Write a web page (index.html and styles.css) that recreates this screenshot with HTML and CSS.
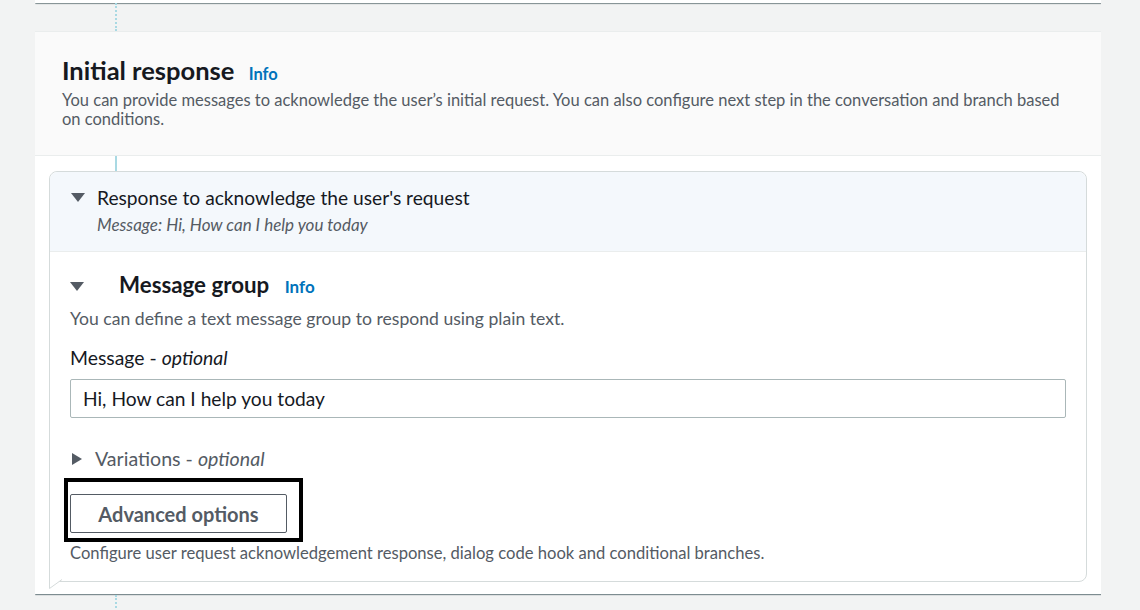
FILE: index.html
```html
<!DOCTYPE html>
<html lang="en">
<head>
<meta charset="utf-8">
<title>Initial response</title>
<link rel="stylesheet" href="styles.css">
</head>
<body>
<div class="page">
  <div class="top-card"></div>
  <div class="connector dotted top"></div>
  <section class="card">
    <header class="card-header">
      <h2 class="card-title">Initial response <a class="info" href="#">Info</a></h2>
      <p class="card-desc">You can provide messages to acknowledge the user’s initial request. You can also configure next step in the conversation and branch based on conditions.</p>
    </header>
    <div class="card-body">
      <div class="bubble">
        <div class="bubble-header">
          <span class="caret down"></span>
          <div class="bubble-heading">
            <div class="bubble-title">Response to acknowledge the user's request</div>
            <div class="bubble-sub">Message: Hi, How can I help you today</div>
          </div>
        </div>
        <div class="bubble-body">
          <div class="group-head">
            <span class="caret down"></span>
            <h3 class="group-title">Message group <a class="info" href="#">Info</a></h3>
          </div>
          <p class="group-desc">You can define a text message group to respond using plain text.</p>
          <label class="field-label">Message - <i>optional</i></label>
          <div class="input">Hi, How can I help you today</div>
          <div class="variations">
            <span class="caret right"></span>
            <span>Variations - <i>optional</i></span>
          </div>
          <div class="highlight">
            <button class="btn" type="button">Advanced options</button>
          </div>
          <p class="help">Configure user request acknowledgement response, dialog code hook and conditional branches.</p>
        </div>
        <svg class="tail" width="16" height="12" viewBox="0 0 16 12" aria-hidden="true">
          <path d="M0.5 0 L0.5 9.5 L13 0.5" fill="#fff" stroke="#d5dbdb" stroke-width="1"/>
        </svg>
      </div>
    </div>
  </section>
  <div class="connector dotted bottom"></div>
</div>
</body>
</html>
```

FILE: styles.css
```css
* { box-sizing: border-box; }

html, body {
  margin: 0;
  padding: 0;
  background: #f2f3f3;
  font-family: Lato, "Open Sans", Arial, sans-serif;
  color: #16191f;
}

.page {
  width: 1066px;
  margin-left: 35px;
  height: 610px;
  overflow: hidden;
}

.top-card {
  height: 3px;
  background: #fff;
  box-shadow: 0 1px 1px 0 rgba(0, 28, 36, 0.35), 1px 1px 1px 0 rgba(0, 28, 36, 0.2);
}

.connector {
  margin-left: 80px;
  width: 2px;
}
.connector.dotted {
  border-left: 2px dotted #a9d9e3;
}
.connector.top { height: 28px; }
.connector.bottom { height: 20px; margin-top: 1px; }

.card {
  background: #fff;
  border-top: 1px solid #eaeded;
  box-shadow: 0 1px 1px 0 rgba(0, 28, 36, 0.35), 1px 1px 1px 0 rgba(0, 28, 36, 0.2);
}

.card-header {
  background: #fafafa;
  border-bottom: 1px solid #eaeded;
  padding: 23px 27px 26px 27px;
}

.card-title {
  margin: 0;
  font-size: 25.5px;
  line-height: 30px;
  font-weight: 700;
  color: #16191f;
}

.info {
  font-size: 16.5px;
  font-weight: 700;
  color: #0073bb;
  text-decoration: none;
  margin-left: 8px;
}

.card-desc {
  margin: 2px 0 0;
  font-size: 16.5px;
  line-height: 19px;
  color: #545b64;
}

.card-body {
  position: relative;
  padding: 15px 14px 12px;
}
.card-body::before {
  content: "";
  position: absolute;
  left: 80px;
  top: 0;
  width: 2px;
  height: 16px;
  background: #a9d9e3;
}

.bubble {
  position: relative;
  border: 1px solid #d5dbdb;
  border-radius: 8px 8px 8px 0;
  background: #fff;
}

.tail {
  position: absolute;
  left: -1px;
  bottom: -10px;
  display: block;
}

.bubble-header {
  display: flex;
  align-items: flex-start;
  background: #f4f8fc;
  border-bottom: 1px solid #eaeded;
  border-radius: 8px 8px 0 0;
  padding: 14px 20px 16px 21px;
}

.caret {
  display: inline-block;
  width: 0;
  height: 0;
  flex: none;
}
.caret.down {
  border-left: 7px solid transparent;
  border-right: 7px solid transparent;
  border-top: 9px solid #545b64;
}
.caret.right {
  border-top: 6px solid transparent;
  border-bottom: 6px solid transparent;
  border-left: 10px solid #545b64;
}

.bubble-header .caret { margin-top: 7px; }

.bubble-heading { margin-left: 12px; }

.bubble-title {
  font-size: 19.2px;
  line-height: 24px;
  color: #16191f;
}

.bubble-sub {
  margin-top: 5px;
  font-size: 17px;
  line-height: 20px;
  font-style: italic;
  color: #545b64;
}

.bubble-body {
  padding: 19px 20px 18px 20px;
}

.group-head {
  display: flex;
  align-items: center;
}
.group-head .caret { margin-right: 35px; margin-top: 1px; }

.group-title {
  margin: 0;
  font-size: 22.3px;
  line-height: 28px;
  font-weight: 700;
}
.group-title .info { margin-left: 10px; font-size: 17px; }

.group-desc {
  margin: 8px 0 0;
  font-size: 17.6px;
  line-height: 20px;
  color: #545b64;
}

.field-label {
  display: block;
  margin-top: 17px;
  font-size: 19.4px;
  line-height: 24px;
  color: #16191f;
}

.input {
  margin-top: 9px;
  height: 39px;
  border: 1px solid #aab7b8;
  border-radius: 2px;
  padding: 0 12px;
  font-size: 19.2px;
  line-height: 37px;
  color: #16191f;
}

.variations {
  display: flex;
  align-items: center;
  margin-top: 29px;
  font-size: 19.6px;
  line-height: 24px;
  color: #545b64;
}
.variations .caret { margin-left: 2px; margin-right: 13px; }

.highlight {
  display: inline-block;
  margin: 7px 0 0 -6px;
  border: 4px solid #000;
  padding: 12px 12px 5px 2px;
}

.btn {
  display: block;
  width: 217px;
  height: 39px;
  background: #fff;
  border: 1px solid #545b64;
  border-radius: 2px;
  font-family: inherit;
  font-size: 20px;
  font-weight: 700;
  color: #545b64;
  padding: 0;
}

.help {
  margin: 1px 0 0;
  font-size: 16.6px;
  line-height: 20px;
  color: #545b64;
}
```
